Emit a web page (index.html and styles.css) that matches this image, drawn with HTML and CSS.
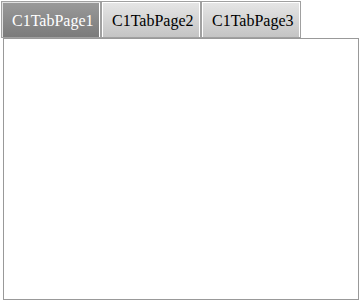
FILE: index.html
```html
<!DOCTYPE html>
<html lang="en">
<head>
  <meta charset="UTF-8" />
  <title>C1Tab</title>
  <link rel="stylesheet" href="styles.css">
</head>
<body>
  <div class="tabs">
    <ul class="tab-nav">
      <li class="tab active">C1TabPage1</li>
      <li class="tab">C1TabPage2</li>
      <li class="tab">C1TabPage3</li>
    </ul>
    <div class="tab-panel"></div>
  </div>
</body>
</html>
```

FILE: styles.css
```css
body {
  margin: 0;
  background: #fff;
  font-family: "Liberation Serif", "Times New Roman", serif;
}
.tabs {
  padding: 1px 0 0 1px;
}
.tab-nav {
  display: flex;
  list-style: none;
  margin: 0;
  padding: 0;
  height: 37px;
}
.tab {
  box-sizing: border-box;
  width: 100px;
  height: 37px;
  padding: 10px 0 0 10px;
  font-size: 16px;
  line-height: 18px;
  color: #000;
  border: 1px solid #a0a0a0;
  box-shadow: inset 1px 1px 0 #fff, inset -1px 0 0 #fff;
  background: linear-gradient(#e6e6e6, #c4c4c4);
  margin-right: 0;
}
.tab.active {
  color: #fff;
  background: linear-gradient(#9a9a9a, #7b7b7b);
  box-shadow: inset 1px 1px 0 #e0e0e0, inset -1px 0 0 #fff;
}
.tab-panel {
  box-sizing: border-box;
  width: 356px;
  height: 262px;
  margin-left: 2px;
  border: 1px solid #999;
  background: #fff;
}
```
